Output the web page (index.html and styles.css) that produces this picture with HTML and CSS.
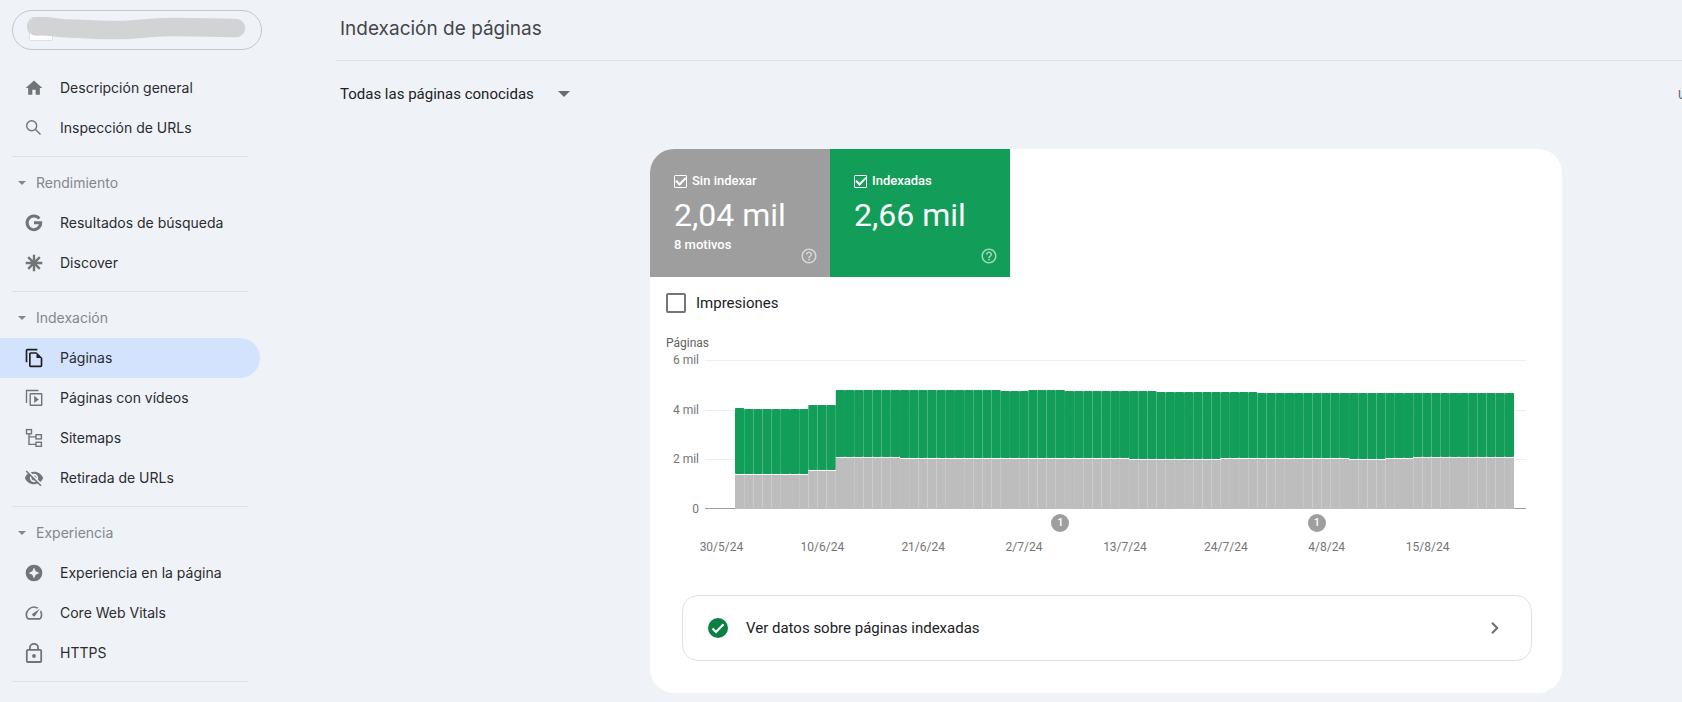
FILE: index.html
```html
<!DOCTYPE html>
<html lang="es">
<head>
<meta charset="utf-8">
<meta name="viewport" content="width=device-width, initial-scale=1">
<title>Indexación de páginas</title>
<link rel="stylesheet" href="styles.css">
</head>
<body>
<div class="app">
  <aside class="sidebar">
    <button class="property" type="button" aria-label="Propiedad">
      <svg class="property-name" viewBox="0 0 220 26" aria-hidden="true">
        <rect x="2.500" y="1.500" width="23" height="23" rx="1" fill="#fff" stroke="#dcdfe3"/>
        <path d="M9 10.500C20 9 28 12.500 42 12.500C60 12.500 66 14.500 92 14C112 14 118 11 146 11C174 11 190 12 209 12" fill="none" stroke="#d2d3d4" stroke-width="18.500" stroke-linecap="round"/>
      </svg>
    </button>
    <nav class="nav" aria-label="Principal">
      <ul class="nav-list">
        <li><a class="nav-item" href="#general"><svg class="icon" viewBox="0 0 24 24"><path d="M10 20v-6h4v6h5v-8h3L12 3 2 12h3v8z"/></svg>Descripción general</a></li>
        <li><a class="nav-item" href="#inspeccion"><svg class="icon" viewBox="0 0 20 20"><g class="line"><circle cx="7.700" cy="7.700" r="5"/><path d="M11.500 11.500L16.500 16.500"/></g></svg>Inspección de URLs</a></li>
      </ul>
      <section class="nav-group">
        <button class="nav-heading" type="button"><span class="caret"></span>Rendimiento</button>
        <ul class="nav-list">
          <li><a class="nav-item" href="#resultados"><svg class="icon" viewBox="0 0 20 20"><path d="M15.300 5.700A6.800 6.800 0 1 0 16.700 9.800H10" fill="none" stroke="currentColor" stroke-width="3"/></svg>Resultados de búsqueda</a></li>
          <li><a class="nav-item" href="#discover"><svg class="icon" viewBox="0 0 20 20"><path d="M10 1.700V18.300M1.700 10H18.300M4.200 4.200L15.800 15.800M15.800 4.200L4.200 15.800" stroke="currentColor" stroke-width="2.400"/></svg>Discover</a></li>
        </ul>
      </section>
      <section class="nav-group">
        <button class="nav-heading" type="button"><span class="caret"></span>Indexación</button>
        <ul class="nav-list">
          <li><a class="nav-item is-active" href="#paginas" aria-current="page"><svg class="icon" viewBox="0 0 24 24"><path fill-rule="evenodd" d="M16 1H4C2.900 1 2 1.900 2 3V17H4V3H16zM15 5L22 12V21C22 22.100 21.100 23 20 23H8C6.900 23 6 22.100 6 21V7C6 5.900 6.900 5 8 5zM8 7V21H20V12H15V7z"/></svg>Páginas</a></li>
          <li><a class="nav-item" href="#videos"><svg class="icon" viewBox="0 0 20 20"><g class="line"><path d="M2.500 15V2.500H14.500"/><rect x="6.200" y="5.700" width="11.500" height="11.500" rx=".5"/></g><path d="M10.200 7.800L14.800 11.400L10.200 15z"/></svg>Páginas con vídeos</a></li>
          <li><a class="nav-item" href="#sitemaps"><svg class="icon" viewBox="0 0 20 20"><g class="line"><rect x="2.500" y="1.600" width="5" height="4.200"/><rect x="12" y="6.700" width="5.400" height="4.200"/><rect x="12" y="14.300" width="5.400" height="4"/><path d="M5 6V16.400H12M5 8.900H12"/></g></svg>Sitemaps</a></li>
          <li><a class="nav-item" href="#retirada"><svg class="icon" viewBox="0 0 24 24"><path d="M12 7c2.760 0 5 2.240 5 5 0 .65-.13 1.260-.36 1.830l2.920 2.920c1.510-1.260 2.700-2.890 3.430-4.750-1.730-4.390-6-7.500-11-7.500-1.400 0-2.740.25-3.980.7l2.160 2.160C10.740 7.130 11.350 7 12 7zM2 4.270l2.280 2.280.46.46C3.080 8.300 1.780 10.020 1 12c1.730 4.390 6 7.500 11 7.500 1.550 0 3.030-.3 4.380-.84l.42.42L19.730 22 21 20.730 3.270 3 2 4.270zM7.530 9.800l1.550 1.550c-.05.21-.08.43-.08.65 0 1.660 1.340 3 3 3 .22 0 .44-.03.65-.08l1.550 1.550c-.67.33-1.410.53-2.200.53-2.760 0-5-2.240-5-5 0-.79.2-1.530.53-2.200zm4.310-.78l3.150 3.150.02-.16c0-1.660-1.340-3-3-3l-.17.01z"/></svg>Retirada de URLs</a></li>
        </ul>
      </section>
      <section class="nav-group">
        <button class="nav-heading" type="button"><span class="caret"></span>Experiencia</button>
        <ul class="nav-list">
          <li><a class="nav-item" href="#experiencia"><svg class="icon" viewBox="0 0 24 24"><path fill-rule="evenodd" d="M12 2a10 10 0 1 0 0 20a10 10 0 1 0 0-20zM12 5.500L14 10L18.500 12L14 14L12 18.500L10 14L5.500 12L10 10z"/></svg>Experiencia en la página</a></li>
          <li><a class="nav-item" href="#vitals"><svg class="icon" viewBox="0 0 24 24"><path d="M20.380 8.570l-1.230 1.850a8 8 0 0 1-.22 7.580H5.070A8 8 0 0 1 15.580 6.850l1.850-1.230A10 10 0 0 0 3.350 19a2 2 0 0 0 1.720 1h13.850a2 2 0 0 0 1.740-1 10 10 0 0 0-.27-10.440zm-9.790 6.840a2 2 0 0 0 2.830 0l5.660-8.490-8.490 5.660a2 2 0 0 0 0 2.830z"/></svg>Core Web Vitals</a></li>
          <li><a class="nav-item" href="#https"><svg class="icon" viewBox="0 0 20 20"><g class="line line-bold"><rect x="2.800" y="6.900" width="14.400" height="12.100" rx="1"/><path d="M5.900 6.900V4.900a4.100 4.100 0 0 1 8.200 0v2"/></g><circle cx="10" cy="13" r="1.900"/></svg>HTTPS</a></li>
        </ul>
      </section>
      <hr class="nav-end">
    </nav>
  </aside>

  <main class="main">
    <header class="page-header"><h1 class="page-title">Indexación de páginas</h1></header>
    <div class="toolbar">
      <div class="filter">
        <select class="filter-select" aria-label="Filtrar páginas"><option>Todas las páginas conocidas</option></select>
        <span class="filter-caret"></span>
      </div>
      <span class="updated">Última actualización</span>
    </div>

    <section class="card">
      <div class="tiles">
        <div class="tile tile-gray">
          <label class="tile-label"><input class="tile-check" type="checkbox" checked>Sin indexar</label>
          <div class="tile-value">2,04 mil</div>
          <div class="tile-note">8 motivos</div>
          <button class="help" type="button" aria-label="Ayuda sobre Sin indexar"><svg viewBox="0 0 24 24"><path d="M11 18h2v-2h-2v2zm1-16C6.480 2 2 6.480 2 12s4.480 10 10 10 10-4.480 10-10S17.520 2 12 2zm0 18c-4.410 0-8-3.590-8-8s3.590-8 8-8 8 3.590 8 8-3.590 8-8 8zm0-14c-2.210 0-4 1.790-4 4h2c0-1.100.9-2 2-2s2 .9 2 2c0 2-3 1.750-3 5h2c0-2.250 3-2.500 3-5 0-2.210-1.790-4-4-4z"/></svg></button>
        </div>
        <div class="tile tile-green">
          <label class="tile-label"><input class="tile-check" type="checkbox" checked>Indexadas</label>
          <div class="tile-value">2,66 mil</div>
          <button class="help" type="button" aria-label="Ayuda sobre Indexadas"><svg viewBox="0 0 24 24"><path d="M11 18h2v-2h-2v2zm1-16C6.480 2 2 6.480 2 12s4.480 10 10 10 10-4.480 10-10S17.520 2 12 2zm0 18c-4.410 0-8-3.590-8-8s3.590-8 8-8 8 3.590 8 8-3.590 8-8 8zm0-14c-2.210 0-4 1.790-4 4h2c0-1.100.9-2 2-2s2 .9 2 2c0 2-3 1.750-3 5h2c0-2.250 3-2.500 3-5 0-2.210-1.790-4-4-4z"/></svg></button>
        </div>
      </div>

      <label class="impressions"><input class="impressions-check" type="checkbox">Impresiones</label>

      <div class="chart">
        <div class="chart-title">Páginas</div>
        <div class="chart-body">
          <div class="y-axis"><span>6 mil</span><span>4 mil</span><span>2 mil</span><span>0</span></div>
          <svg class="plot" id="plot" viewBox="0 0 821 149" preserveAspectRatio="none" role="img" aria-label="Páginas indexadas y sin indexar por día"></svg>
        </div>
        <div class="markers">
          <button class="marker marker-first" type="button">1</button>
          <button class="marker marker-second" type="button">1</button>
        </div>
        <div class="x-axis"><span>30/5/24</span><span>10/6/24</span><span>21/6/24</span><span>2/7/24</span><span>13/7/24</span><span>24/7/24</span><span>4/8/24</span><span>15/8/24</span></div>
      </div>

      <button class="indexed-link" type="button">
        <svg class="ok" viewBox="0 0 20 20" aria-hidden="true"><circle cx="10" cy="10" r="10" fill="#0b8043"/><path d="M4.500 10.500L8 14L15.500 6.300" fill="none" stroke="#fff" stroke-width="2.200"/></svg>
        <span class="indexed-text">Ver datos sobre páginas indexadas</span>
        <svg class="chevron" viewBox="0 0 20 20" aria-hidden="true"><path d="M7 4.800L12.200 10L7 15.200" fill="none" stroke="#6b6f73" stroke-width="2"/></svg>
      </button>
    </section>
  </main>
</div>
<script src="chart.js"></script>
</body>
</html>
```
FILE: styles.css
```css
* { box-sizing: border-box; }

body {
  margin: 0;
  background: #eff3f8;
  color: #202124;
  font-family: Roboto, "Liberation Sans", sans-serif;
  font-size: 14px;
}

button, select { font: inherit; color: inherit; border: 0; padding: 0; background: none; }
button { cursor: pointer; }

.app { display: flex; min-height: 100vh; overflow: hidden; }

/* Sidebar */
.sidebar { flex: 0 0 336px; padding-top: 10px; font-family: Inter, "Open Sans", sans-serif; }
.property {
  display: flex;
  align-items: center;
  width: 250px;
  height: 40px;
  margin-left: 12px;
  padding: 0 14px 2px;
  border: 1px solid #c4c7c9;
  border-radius: 20px;
}
.property-name { width: 220px; height: 26px; }

.nav { width: 260px; padding-top: 18px; }
.nav-list { list-style: none; margin: 0; padding: 0; }
.nav-item {
  display: flex;
  align-items: center;
  gap: 16px;
  height: 40px;
  padding: 0 0 1px 24px;
  border-radius: 0 20px 20px 0;
  color: #2b2c2f;
  text-decoration: none;
}
.nav-item.is-active { background: #d3e3fd; }
.icon { flex: none; width: 20px; height: 20px; color: #727476; fill: currentColor; }
.is-active .icon { color: #1f1f1f; }
.line { fill: none; stroke: currentColor; stroke-width: 1.4; }
.line-bold { stroke-width: 1.8; }

.nav-group { margin-top: 8px; }
.nav-group::before,
.nav-end { content: ""; display: block; height: 1px; margin: 0 12px; border: 0; background: #dfe1e3; }
.nav-end { margin-top: 8px; }
.nav-heading {
  display: flex;
  align-items: center;
  gap: 10px;
  height: 40px;
  margin-top: 6px;
  padding: 0 0 1px 18px;
  color: #85878a;
}
.caret { border: 4px solid transparent; border-top-color: currentColor; border-bottom: 0; }

/* Main */
.main { flex: 1; min-width: 0; }
.page-header {
  display: flex;
  align-items: center;
  height: 61px;
  padding: 0 4px 2px;
  border-bottom: 1px solid #dfe2e2;
}
.page-title { margin: 0; font: 400 19px/28px Inter, "Open Sans", sans-serif; color: #444648; }

.toolbar { display: flex; align-items: center; justify-content: space-between; height: 66px; padding-left: 4px; }
.filter { position: relative; }
.filter-select { appearance: none; padding-right: 36px; font-size: 15px; line-height: 24px; }
.filter-caret {
  position: absolute;
  right: 0;
  top: 9px;
  border: 6px solid transparent;
  border-top-color: #6a6c6e;
  border-bottom: 0;
  pointer-events: none;
}
.updated { flex: 0 0 4px; width: 4px; overflow: hidden; white-space: nowrap; font-size: 13px; color: #5f6368; }

.card {
  margin: 22px 120px 8px 314px;
  padding-bottom: 32px;
  border-radius: 24px;
  background: #fff;
  overflow: hidden;
}

.tiles { display: flex; }
.tile {
  position: relative;
  width: 180px;
  height: 128px;
  padding: 24px;
  color: #fff;
  font-size: 13px;
  font-weight: 500;
  line-height: 16px;
}
.tile-gray { background: #9e9e9e; }
.tile-green { background: #129e58; }
.tile-label { display: flex; align-items: center; gap: 5px; }
.tile-check {
  appearance: none;
  width: 13px;
  height: 13px;
  margin: 0;
  border: 1px solid #fff;
  border-radius: 1px;
  display: grid;
  place-items: center;
}
.tile-check:checked::before {
  content: "";
  width: 8px;
  height: 4px;
  border: solid #fff;
  border-width: 0 0 2px 2px;
  transform: translateY(-1px) rotate(-45deg);
}
.tile-value { margin-top: 6px; font-size: 32px; font-weight: 400; line-height: 40px; }
.tile-note { margin-top: 2px; }
.help { position: absolute; right: 12px; bottom: 12px; width: 18px; height: 18px; color: rgba(255, 255, 255, .6); }
.help svg { display: block; fill: currentColor; }

.impressions { display: flex; align-items: center; gap: 10px; margin: 14px 16px 0; font-size: 15px; line-height: 24px; }
.impressions-check { appearance: none; width: 20px; height: 20px; margin: 0; border: 2px solid #757575; border-radius: 2px; }

/* Chart */
.chart { margin: 20px 36px 0 16px; font-size: 12px; line-height: 16px; color: #757575; }
.chart-title { margin-bottom: 9px; color: #616161; }
.chart-body { display: grid; grid-template-columns: 39px 1fr; height: 149px; }
.y-axis {
  display: flex;
  flex-direction: column;
  justify-content: space-between;
  margin: -8px 6px -8px 0;
  text-align: right;
}
.plot { display: block; width: 100%; height: 149px; }
.grid-line { fill: #eee; }
.base-line { fill: #9e9e9e; }
.bar-gray { fill: #bdbdbd; }
.bar-green { fill: #129e58; }
.bar-gap { fill: #fff; }

.markers { display: grid; grid-template-columns: repeat(85, 1fr); margin: 5px 12px 0 69px; }
.marker {
  grid-row: 1;
  justify-self: center;
  width: 18px;
  height: 18px;
  margin: 0 -9px;
  border-radius: 50%;
  background: #9e9e9e;
  color: #fff;
  font-size: 11px;
  font-weight: 500;
  line-height: 18px;
}
.marker-first { grid-column: 36; }
.marker-second { grid-column: 64; }
.x-axis { display: grid; grid-template-columns: repeat(8, 1fr); margin: 7px 48px 0 5px; text-align: center; }

.indexed-link {
  display: flex;
  align-items: center;
  width: calc(100% - 62px);
  height: 66px;
  margin: 40px 30px 0 32px;
  padding: 0 26px 0 25px;
  border: 1px solid #dfe0e1;
  border-radius: 16px;
  font-size: 15px;
  text-align: left;
}
.ok { flex: none; width: 20px; height: 20px; }
.indexed-text { flex: 1; margin-left: 18px; }
.chevron { flex: none; width: 20px; height: 20px; }
```
FILE: chart.js
```js
// Runs of consecutive days: [number of days, height in plot units].
const totals = [[1, 100], [7, 99], [3, 103], [18, 118], [3, 117], [4, 118], [10, 117], [11, 116], [28, 115]];
const notIndexed = [[8, 34], [3, 38], [7, 51], [25, 50], [10, 49], [14, 50], [4, 49], [3, 50], [11, 51]];

const expand = runs => runs.flatMap(([days, height]) => Array(days).fill(height));
const plot = document.getElementById('plot');
const base = 148;
const start = 30;
const step = 779 / 85;

function rect(x, y, width, height, name, radius) {
  const node = document.createElementNS('http://www.w3.org/2000/svg', 'rect');
  const attrs = { x, y, width, height, class: name, rx: radius || 0 };
  Object.entries(attrs).forEach(([key, value]) => node.setAttribute(key, value));
  plot.appendChild(node);
}

[0, 50, 99].forEach(y => rect(0, y, 821, 1, 'grid-line'));
rect(0, base, 821, 1, 'base-line');

const gray = expand(notIndexed);
expand(totals).forEach((total, day) => {
  const x = start + day * step;
  const split = base - gray[day];
  rect(x, base - total, step, total - gray[day], 'bar-green', 1);
  rect(x, split + 1, step, gray[day], 'bar-gray');
  rect(x, split, step, 1, 'bar-gap');
});
```
